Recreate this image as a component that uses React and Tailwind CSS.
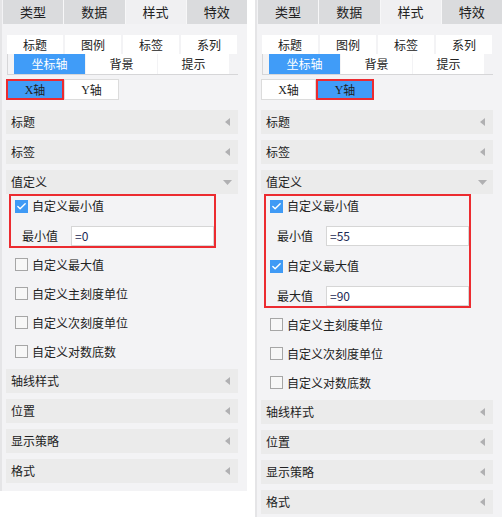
import { Check } from "lucide-react"

const font = { fontFamily: '"Noto Sans CJK SC", "Noto Sans", sans-serif' }

const LeftArrow = () => (
    <svg width="5" height="8" viewBox="0 0 5 8" className="mr-[8px]">
        <path d="M5 0 L0 4 L5 8 Z" fill="#b0b0b2" />
    </svg>
)

const DownArrow = () => (
    <svg width="9" height="5" viewBox="0 0 9 5" className="mr-[6px]">
        <path d="M0 0 L9 0 L4.5 5 Z" fill="#b0b0b2" />
    </svg>
)

const Header = ({ title, open }) => (
    <div className="ml-[4px] w-[232px] h-[24px] bg-[#ebebeb] flex items-center justify-between pl-[5px] text-[12px] text-[#222]">
        <span>{title}</span>
        {open ? <DownArrow /> : <LeftArrow />}
    </div>
)

const CheckBox = ({ checked }) =>
    checked ? (
        <span className="w-[13px] h-[13px] bg-[#3f9af5] flex items-center justify-center">
            <Check size={11} strokeWidth={3} color="white" />
        </span>
    ) : (
        <span className="w-[13px] h-[13px] border border-[#a6a6a6] bg-[#f7f7f7]" />
    )

const CheckRow = ({ label, checked, className = "" }) => (
    <div className={`flex items-center gap-[4px] text-[12px] text-[#222] ${className}`}>
        <CheckBox checked={checked} />
        <span>{label}</span>
    </div>
)

const ValueGroup = ({ check, label, value }) => (
    <div className="flex flex-col">
        <CheckRow label={check} checked className="h-[20px] pl-[4px]" />
        <div className="mt-[10px] h-[20px] flex items-center">
            <span className="w-[60px] pl-[11px] text-[12px] text-[#222]">{label}</span>
            <div className="flex-1 h-[20px] bg-white border border-[#d6d6d6] flex items-center pl-[3px] text-[12px] text-[#1b2a55]">
                {value}
            </div>
        </div>
    </div>
)

const Panel = ({ axis, showMax }) => {
    const topTabs = ["类型", "数据", "样式", "特效"]
    const row1 = ["标题", "图例", "标签", "系列"]
    const row2 = ["坐标轴", "背景", "提示"]
    const rest = showMax
        ? ["自定义主刻度单位", "自定义次刻度单位", "自定义对数底数"]
        : ["自定义最大值", "自定义主刻度单位", "自定义次刻度单位", "自定义对数底数"]

    return (
        <div className="w-[247px] bg-[#f3f3f5] border-l-2 border-[#e5e5e7] flex flex-col pb-[8px]" style={font}>
            <div className="ml-[1px] w-[244px] h-[24px] grid grid-cols-4 gap-[1px] bg-[#f7f7f8]">
                {topTabs.map((t, i) => (
                    <div
                        key={t}
                        className={`flex items-center justify-center text-[13px] text-[#222] ${i === 2 ? "bg-[#f0f0f2]" : "bg-[#dadbdd]"}`}
                    >
                        {t}
                    </div>
                ))}
            </div>

            <div className="mt-[11px] ml-[5px] flex gap-[2px]">
                {row1.map((t) => (
                    <div key={t} className="w-[56px] h-[19px] bg-white flex items-center justify-center text-[12px] text-[#222]">
                        {t}
                    </div>
                ))}
            </div>
            <div className="ml-[5px] w-[231px] h-[21px] border-l border-b border-[#d6d6d8] pl-[6px] flex gap-[1px]">
                {row2.map((t, i) => (
                    <div
                        key={t}
                        className={`w-[71px] h-[20px] flex items-center justify-center text-[12px] ${i === 0 ? "bg-[#409cf8] text-white" : "bg-white text-[#222]"}`}
                    >
                        {t}
                    </div>
                ))}
            </div>

            <div className="mt-[4px] ml-[4px] flex">
                {["X", "Y"].map((a) => (
                    <div
                        key={a}
                        className={`h-[21px] flex items-center justify-center text-[12px] text-[#222] ${
                            a === axis
                                ? "w-[58px] bg-[#409cf8] border-2 border-[#ec2b30]"
                                : "w-[55px] bg-white border border-[#dcdcdc]"
                        }`}
                    >
                        <span style={{ fontFamily: '"Liberation Serif", serif' }}>{a}</span>
                        <span>轴</span>
                    </div>
                ))}
            </div>

            <div className="mt-[10px] flex flex-col gap-[6px]">
                <Header title="标题" />
                <Header title="标签" />
                <Header title="值定义" open />
            </div>

            <div className="ml-[7px] w-[207px] border-2 border-[#ec2b30] flex flex-col gap-[10px]">
                <ValueGroup check="自定义最小值" label="最小值" value={axis === "X" ? "=0" : "=55"} />
                {showMax && <ValueGroup check="自定义最大值" label="最大值" value="=90" />}
            </div>

            <div className="mt-[2px] flex flex-col">
                {rest.map((r) => (
                    <CheckRow key={r} label={r} className="h-[29px] ml-[13px]" />
                ))}
            </div>

            <div className="mt-[3px] flex flex-col gap-[6px]">
                <Header title="轴线样式" />
                <Header title="位置" />
                <Header title="显示策略" />
                <Header title="格式" />
            </div>
        </div>
    )
}

export default function App() {
    return (
        <div className="w-[503px] h-[517px] bg-white flex items-start gap-[8px]">
            <Panel axis="X" />
            <Panel axis="Y" showMax />
        </div>
    )
}
